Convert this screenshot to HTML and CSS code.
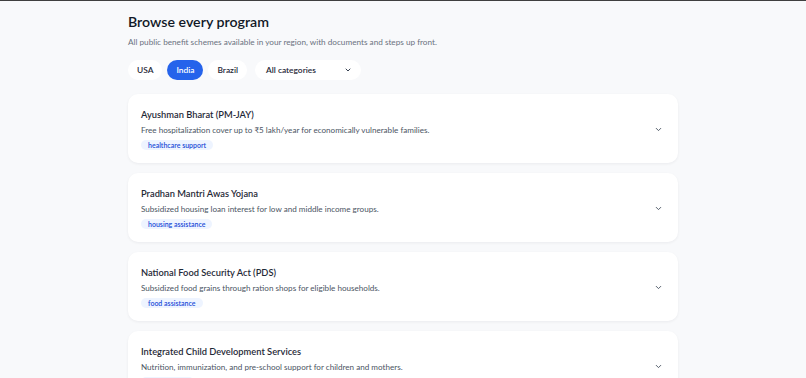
FILE: index.html
```html
<!DOCTYPE html>
<html lang="en">
<head>
  <meta charset="UTF-8" />
  <title>Browse every program</title>
  <meta name="viewport" content="width=device-width, initial-scale=1.0" />
  <link rel="stylesheet" href="styles.css">
</head>
<body>
  <div class="topbar"></div>
  <main class="page">
    <h1 class="page-title">Browse every program</h1>
    <p class="page-sub">All public benefit schemes available in your region, with documents and steps up front.</p>

    <div class="filters">
      <button class="chip">USA</button>
      <button class="chip active">India</button>
      <button class="chip">Brazil</button>
      <div class="select">
        <span>All categories</span>
        <svg width="8" height="8" viewBox="0 0 24 24" fill="none" stroke="#374151" stroke-width="3" stroke-linecap="round" stroke-linejoin="round"><path d="M6 9l6 6 6-6"/></svg>
      </div>
    </div>

    <div class="list">
      <div class="card">
        <div class="card-body">
          <h2 class="card-title">Ayushman Bharat (PM-JAY)</h2>
          <p class="card-desc">Free hospitalization cover up to ₹5 lakh/year for economically vulnerable families.</p>
          <span class="tag">healthcare support</span>
        </div>
        <svg class="chev" width="9" height="9" viewBox="0 0 24 24" fill="none" stroke="#4b5563" stroke-width="2.5" stroke-linecap="round" stroke-linejoin="round"><path d="M6 9l6 6 6-6"/></svg>
      </div>
      <div class="card">
        <div class="card-body">
          <h2 class="card-title">Pradhan Mantri Awas Yojana</h2>
          <p class="card-desc">Subsidized housing loan interest for low and middle income groups.</p>
          <span class="tag">housing assistance</span>
        </div>
        <svg class="chev" width="9" height="9" viewBox="0 0 24 24" fill="none" stroke="#4b5563" stroke-width="2.5" stroke-linecap="round" stroke-linejoin="round"><path d="M6 9l6 6 6-6"/></svg>
      </div>
      <div class="card">
        <div class="card-body">
          <h2 class="card-title">National Food Security Act (PDS)</h2>
          <p class="card-desc">Subsidized food grains through ration shops for eligible households.</p>
          <span class="tag">food assistance</span>
        </div>
        <svg class="chev" width="9" height="9" viewBox="0 0 24 24" fill="none" stroke="#4b5563" stroke-width="2.5" stroke-linecap="round" stroke-linejoin="round"><path d="M6 9l6 6 6-6"/></svg>
      </div>
      <div class="card">
        <div class="card-body">
          <h2 class="card-title">Integrated Child Development Services</h2>
          <p class="card-desc">Nutrition, immunization, and pre-school support for children and mothers.</p>
          <span class="tag">child welfare</span>
        </div>
        <svg class="chev" width="9" height="9" viewBox="0 0 24 24" fill="none" stroke="#4b5563" stroke-width="2.5" stroke-linecap="round" stroke-linejoin="round"><path d="M6 9l6 6 6-6"/></svg>
      </div>
    </div>
  </main>
</body>
</html>
```

FILE: styles.css
```css
* {
  box-sizing: border-box;
}

body {
  margin: 0;
  font-family: Lato, 'Noto Sans', sans-serif;
  background: #f8f9fb;
  color: #1f2937;
  overflow: hidden;
}

.topbar {
  height: 1px;
  background: #3f3f3f;
}

.page {
  width: 550px;
  margin: 0 auto;
  padding-top: 11px;
}

.page-title {
  margin: 0;
  font-size: 14.2px;
  font-weight: 600;
  color: #111827;
  line-height: 20px;
}

.page-sub {
  margin: 4px 0 0;
  font-size: 8.2px;
  color: #6b7280;
  line-height: 12px;
}

.filters {
  display: flex;
  align-items: center;
  gap: 5px;
  margin-top: 12px;
}

.chip {
  font-family: inherit;
  font-size: 8.4px;
  font-weight: 600;
  height: 20px;
  padding: 0 9px;
  border: none;
  border-radius: 10px;
  background: #fff;
  color: #1f2937;
}

.chip.active {
  background: #2563eb;
  color: #fff;
}

.select {
  display: flex;
  align-items: center;
  justify-content: space-between;
  width: 106px;
  height: 20px;
  margin-left: 3px;
  padding: 0 9px 0 11px;
  border-radius: 10px;
  background: #fff;
  font-size: 8.4px;
  font-weight: 600;
}

.list {
  display: flex;
  flex-direction: column;
  gap: 10px;
  margin-top: 14px;
}

.card {
  display: flex;
  align-items: center;
  justify-content: space-between;
  height: 69px;
  padding: 1px 15px 0 13px;
  background: #fff;
  border-radius: 10px;
  box-shadow: 0 1px 3px rgba(15, 23, 42, 0.06);
}

.card-body {
  display: flex;
  flex-direction: column;
  align-items: flex-start;
  align-self: flex-start;
  padding-top: 13px;
}

.card-title {
  margin: 0;
  font-size: 9.3px;
  font-weight: 600;
  color: #1f2937;
  line-height: 14px;
}

.card-desc {
  margin: 2px 0 0;
  font-size: 8.1px;
  color: #4b5563;
  line-height: 13px;
}

.tag {
  margin-top: 3px;
  padding: 0 7px;
  font-size: 7px;
  font-weight: 600;
  line-height: 10px;
  color: #1d4ed8;
  background: #eef4ff;
  border-radius: 5px;
}
```
